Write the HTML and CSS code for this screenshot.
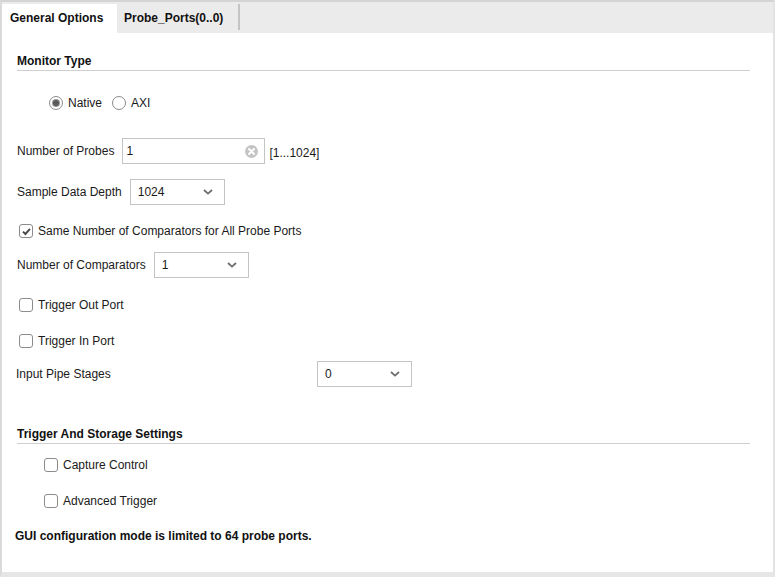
FILE: index.html
```html
<!DOCTYPE html>
<html>
<head>
<meta charset="utf-8">
<link rel="stylesheet" href="styles.css">
</head>
<body>
<div class="window">
  <div class="tabbar">
    <div class="tab active">General Options</div>
    <div class="tab">Probe_Ports(0..0)</div>
    <div class="tab-sep"></div>
  </div>
  <div class="content">
    <div class="heading h-monitor">Monitor Type</div>

    <div class="row radios">
      <span class="radio checked"></span><span class="rlabel">Native</span>
      <span class="radio"></span><span class="rlabel">AXI</span>
    </div>

    <div class="row ctl r-probes">
      <span class="label">Number of Probes</span>
      <div class="input">
        <span class="val">1</span>
        <svg class="clear" width="13" height="13" viewBox="0 0 13 13"><circle cx="6.5" cy="6.5" r="6.5" fill="#c4c4c4"/><path d="M4 4 L9 9 M9 4 L4 9" stroke="#fff" stroke-width="2" stroke-linecap="round"/></svg>
      </div>
      <span class="range">[1...1024]</span>
    </div>

    <div class="row ctl r-depth">
      <span class="label">Sample Data Depth</span>
      <div class="select"><span class="val">1024</span><svg class="chev" width="10" height="6" viewBox="0 0 10 6"><path d="M1 1 L5 4.6 L9 1" fill="none" stroke="#6e6e6e" stroke-width="1.8"/></svg></div>
    </div>

    <div class="row chk r-same">
      <span class="cb checked"><svg width="11" height="11" viewBox="0 0 11 11"><path d="M2 5.6 L4.4 8 L9 2.8" fill="none" stroke="#4a4a4a" stroke-width="1.9"/></svg></span>
      <span class="clabel">Same Number of Comparators for All Probe Ports</span>
    </div>

    <div class="row ctl r-comp">
      <span class="label">Number of Comparators</span>
      <div class="select"><span class="val">1</span><svg class="chev" width="10" height="6" viewBox="0 0 10 6"><path d="M1 1 L5 4.6 L9 1" fill="none" stroke="#6e6e6e" stroke-width="1.8"/></svg></div>
    </div>

    <div class="row chk r-tout">
      <span class="cb"></span><span class="clabel">Trigger Out Port</span>
    </div>

    <div class="row chk r-tin">
      <span class="cb"></span><span class="clabel">Trigger In Port</span>
    </div>

    <div class="row ctl r-pipe">
      <span class="label pipe-label">Input Pipe Stages</span>
      <div class="select"><span class="val">0</span><svg class="chev" width="10" height="6" viewBox="0 0 10 6"><path d="M1 1 L5 4.6 L9 1" fill="none" stroke="#6e6e6e" stroke-width="1.8"/></svg></div>
    </div>

    <div class="heading h-trigger">Trigger And Storage Settings</div>

    <div class="row chk r-cap">
      <span class="cb"></span><span class="clabel">Capture Control</span>
    </div>

    <div class="row chk r-adv">
      <span class="cb"></span><span class="clabel">Advanced Trigger</span>
    </div>

    <div class="note">GUI configuration mode is limited to 64 probe ports.</div>
  </div>
</div>
</body>
</html>
```

FILE: styles.css
```css
* { box-sizing: border-box; }
html, body { margin: 0; padding: 0; background: #ffffff; }
body {
  font-family: "Liberation Sans", Arial, sans-serif;
  font-size: 12px;
  color: #1a1a1a;
}
.window {
  width: 775px;
  height: 577px;
  border-top: 2px solid #d4d4d4;
  border-left: 2px solid #dadada;
  border-right: 2px solid #e3e3e3;
  border-bottom: 5px solid #e6e6e6;
  display: flex;
  flex-direction: column;
  background: #fff;
}
.tabbar {
  height: 31px;
  background: #ebebeb;
  display: flex;
  align-items: stretch;
  padding-top: 2px;
}
.tab {
  font-weight: bold;
  line-height: 27px;
  padding: 1px 8px 0 8px;
  color: #111;
}
.tab.active {
  background: #fff;
  width: 115px;
}
.tab:not(.active) {
  padding-left: 7px;
  width: 121px;
}
.tab-sep {
  width: 2px;
  background: #c4c4c4;
  margin-bottom: 3px;
}
.content {
  flex: 1;
  display: flex;
  flex-direction: column;
  padding: 0 23px 0 13px;
}
.heading {
  font-weight: bold;
  line-height: 14px;
  padding-bottom: 2px;
  border-bottom: 1px solid #cfcfcf;
  margin-left: 2px;
  color: #111;
}
.h-monitor { margin-top: 21px; }
.h-trigger { margin-top: 40px; }
.row {
  display: flex;
  align-items: center;
}
.ctl { height: 26px; margin-left: 2px; }
.chk { height: 16px; }
.radios { height: 16px; margin-top: 24px; margin-left: 34px; }
.radio {
  width: 14px;
  height: 14px;
  border-radius: 50%;
  border: 1px solid #8c8c8c;
  background: #fff;
  display: flex;
  align-items: center;
  justify-content: center;
}
.radio.checked::after {
  content: "";
  width: 6px;
  height: 6px;
  border-radius: 50%;
  background: #5a5a5a;
  box-shadow: 0 0 0 1px #9a9a9a;
}
.rlabel { margin-left: 5px; margin-right: 10px; }
.label { margin-right: 8px; }
.pipe-label { width: 301px; margin-right: 0; margin-left: -1px; }
.input {
  width: 143px;
  height: 26px;
  border: 1px solid #c4c4c4;
  display: flex;
  align-items: center;
  padding-left: 3px;
  padding-right: 6px;
}
.input .val { flex: 1; }
.range { margin-left: 4px; margin-top: 3px; }
.select {
  width: 95px;
  height: 26px;
  border: 1px solid #c4c4c4;
  display: flex;
  align-items: center;
  padding-left: 7px;
  padding-right: 11px;
}
.select .val { flex: 1; }
.r-probes { margin-top: 27px; }
.r-depth { margin-top: 15px; }
.r-same { margin-top: 18px; margin-left: 4px; }
.r-comp { margin-top: 13px; }
.r-tout { margin-top: 19px; margin-left: 4px; }
.r-tin { margin-top: 20px; margin-left: 4px; }
.r-pipe { margin-top: 12px; }
.r-cap { margin-top: 13px; margin-left: 29px; }
.r-adv { margin-top: 20px; margin-left: 29px; }
.cb {
  width: 14px;
  height: 14px;
  border: 1px solid #8c8c8c;
  border-radius: 3px;
  background: #fff;
  display: flex;
  align-items: center;
  justify-content: center;
}
.clabel { margin-left: 5px; }
.note {
  font-weight: bold;
  line-height: 14px;
  margin-top: 20px;
  color: #111;
}
```
